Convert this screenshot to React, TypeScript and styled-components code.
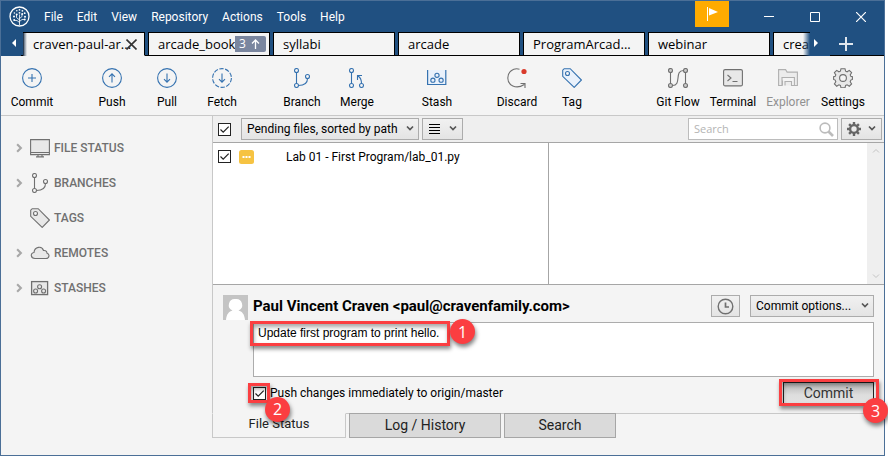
import React from "react";
import styled, { createGlobalStyle, css } from "styled-components";

const c = {
  blue: "#205081",
  frame: "#4b6f97",
  panel: "#f4f4f4",
  line: "#c8c8c8",
  edge: "#a6a6a6",
  icon: "#3572b0",
  gray: "#707070",
  red: "#fb3e41",
};

const GlobalStyle = createGlobalStyle`
  *, *::before, *::after { box-sizing: border-box; }
  body {
    margin: 0;
    background: #fff;
    color: #000;
    font: 12px/16px Roboto, "Open Sans", sans-serif;
  }
  button, input, select, textarea { font: inherit; color: inherit; margin: 0; }
  svg { display: block; flex: none; }
`;

const Page = styled.div`
  padding-right: 3px;
`;

const Window = styled.div`
  display: flex;
  flex-direction: column;
  min-height: 100vh;
  border: 1px solid ${c.frame};
  background: ${c.panel};
`;

/* Title bar */

const TitleBar = styled.header`
  display: flex;
  height: 31px;
  padding-left: 8px;
  background: ${c.blue};
  color: #fff;
`;

const Menu = styled.nav`
  display: flex;
  flex: 1;
  align-items: center;
  gap: 14px;
  padding-left: 14px;
`;

const MenuItem = styled.button`
  padding: 0;
  border: 0;
  background: none;
`;

const LogoSlot = styled.div`
  display: flex;
  align-items: center;
`;

const FlagButton = styled.button`
  display: flex;
  align-items: center;
  justify-content: center;
  width: 34px;
  height: 26px;
  padding: 0;
  border: 0;
  background: #ffab00;
`;

const WindowControls = styled.div`
  display: flex;
  padding-left: 17px;
`;

const WindowButton = styled.button`
  display: flex;
  align-items: center;
  justify-content: center;
  width: 46px;
  padding: 0;
  border: 0;
  background: none;
`;

/* Repository tabs */

const TabBar = styled.div`
  display: flex;
  height: 24px;
  background: ${c.blue};
`;

const ScrollButton = styled.button<{ $side: "left" | "right" }>`
  display: flex;
  align-items: center;
  justify-content: center;
  width: 20px;
  padding: ${(p) => (p.$side === "left" ? "0 0 2px 6px" : "0 8px 2px 0")};
  border: 0;
  background: none;
`;

const TabStrip = styled.div`
  display: flex;
  flex: 1;
  gap: 3px;
  min-width: 0;
  overflow: hidden;
  position: relative;
  padding-left: 2px;
  box-shadow: inset 0 -1px #000;
  &::before, &::after {
    content: "";
    position: absolute;
    top: 1px;
    bottom: 0;
    width: 4px;
  }
  &::before { left: 2px; background: linear-gradient(to right, #33475f, transparent); }
  &::after { right: 0; width: 7px; background: linear-gradient(to left, ${c.blue}, transparent); }
`;

const RepoTab = styled.div<{ $active?: boolean }>`
  display: flex;
  flex: none;
  align-items: center;
  width: 122px;
  padding: 0 3px 0 9px;
  border: 1px solid #000;
  ${(p) => p.$active && css`border-bottom-color: ${c.panel};`}
  background: ${c.panel};
  font-family: "Open Sans", sans-serif;
  font-size: 13px;
  white-space: nowrap;
`;

const RepoName = styled.button`
  flex: 1;
  min-width: 0;
  padding: 0;
  border: 0;
  background: none;
  text-align: left;
`;

const CloseButton = styled.button`
  padding: 0;
  margin-right: 4px;
  border: 0;
  background: none;
`;

const AheadBadge = styled.span`
  display: flex;
  align-items: center;
  justify-content: space-between;
  width: 31px;
  height: 16px;
  padding: 0 6px 0 4px;
  border-radius: 0 2px 2px 0;
  background: #7a869f;
  color: #fff;
  font-size: 12px;
`;

const NewTabButton = styled.button`
  display: flex;
  align-items: center;
  width: 54px;
  padding: 0 0 0 9px;
  border: 0;
  border-bottom: 1px solid #000;
  background: none;
`;

/* Toolbar */

const Toolbar = styled.div`
  display: flex;
  justify-content: space-between;
  height: 60px;
  padding: 0 14px 0 3px;
  border-bottom: 1px solid ${c.line};
`;

const ToolSide = styled.div`
  display: flex;
  gap: 25px;
`;

const ToolGroup = styled.div`
  display: flex;
`;

const Tool = styled.button`
  display: flex;
  flex-direction: column;
  align-items: center;
  gap: 6px;
  width: 55px;
  padding: 12px 0 0 1px;
  border: 0;
  background: none;
  white-space: nowrap;
  &:disabled { color: #919191; }
`;

/* Body */

const Body = styled.div`
  display: flex;
  flex: 1;
`;

const Sidebar = styled.nav`
  display: flex;
  flex: none;
  flex-direction: column;
  width: 211px;
  padding-top: 15px;
`;

const SideItem = styled.button`
  display: flex;
  align-items: center;
  height: 35px;
  padding: 0 0 2px 13px;
  border: 0;
  background: none;
  color: ${c.gray};
  font-weight: 500;
`;

const SideArrow = styled.span`
  width: 16px;
`;

const SideLabel = styled.span`
  padding-left: 4px;
`;

const Main = styled.main`
  display: flex;
  flex: 1;
  flex-direction: column;
  min-width: 0;
`;

const Content = styled.div`
  display: flex;
  flex: 1;
  flex-direction: column;
  border-left: 1px solid ${c.line};
`;

const FilterBar = styled.div`
  display: flex;
  align-items: center;
  gap: 3px;
  height: 27px;
  padding: 0 2px 0 5px;
  border-bottom: 1px solid ${c.edge};
  background: #efefef;
`;

const Spacer = styled.div`
  flex: 1;
`;

const Tick = styled.input`
  flex: none;
  appearance: none;
  width: 13px;
  height: 13px;
  border: 1px solid #222;
  background: #fff;
  &:checked {
    background: #fff
      url("data:image/svg+xml,%3Csvg xmlns='http://www.w3.org/2000/svg' viewBox='0 0 11 11'%3E%3Cpath d='M1.5 5.5l2.7 2.7L9.7 2.6' fill='none' stroke='%23222' stroke-width='1.2'/%3E%3C/svg%3E");
  }
`;

const buttonFace = css`
  border: 1px solid #acacac;
  border-radius: 0;
  background: linear-gradient(#f1f1f1, #e4e4e4);
`;

const SelectWrap = styled.span<{ $width: number; $lead?: number }>`
  display: grid;
  align-items: center;
  width: ${(p) => p.$width}px;
  margin-left: ${(p) => p.$lead ?? 0}px;
  & > * { grid-area: 1 / 1; }
  & > svg { justify-self: end; margin-right: 5px; margin-bottom: 3px; pointer-events: none; }
`;

const Select = styled.select`
  ${buttonFace}
  appearance: none;
  width: 100%;
  height: 22px;
  padding: 0 0 0 5px;
`;

const DropButton = styled.button`
  ${buttonFace}
  display: flex;
  align-items: center;
  justify-content: space-between;
  width: 41px;
  height: 22px;
  padding: 0 5px;
  & > svg:last-child { margin-bottom: 3px; }
`;

const SearchBox = styled.label`
  display: flex;
  align-items: center;
  width: 150px;
  height: 22px;
  padding-right: 3px;
  border: 1px solid #bcbcbc;
  background: #fff;
`;

const SearchInput = styled.input`
  flex: 1;
  min-width: 0;
  padding: 0 0 0 5px;
  border: 0;
  outline: 0;
  background: none;
  font-family: "Open Sans", sans-serif;
  font-size: 11px;
  &::placeholder { color: #b4b4b4; opacity: 1; }
`;

const Files = styled.div`
  display: flex;
  flex: 1;
  border-bottom: 1px solid ${c.edge};
  background: #fff;
`;

const FileList = styled.div`
  width: 336px;
  padding: 5px 5px;
  border-right: 1px solid ${c.edge};
`;

const FileRow = styled.label`
  display: flex;
  align-items: center;
  height: 17px;
`;

const FileState = styled.span`
  display: flex;
  margin: 0 32px 0 8px;
`;

const DiffPane = styled.div`
  flex: 1;
`;

const ScrollTrack = styled.div`
  display: flex;
  flex-direction: column;
  align-items: center;
  justify-content: space-between;
  width: 17px;
  padding: 4px 0;
  background: #efefef;
`;

/* Commit form */

const CommitForm = styled.form`
  display: flex;
  flex-direction: column;
  padding: 10px 10px 9px;
`;

const Author = styled.div`
  display: flex;
  align-items: center;
  height: 25px;
`;

const AuthorName = styled.strong`
  flex: 1;
  padding: 0 0 4px 5px;
  font-size: 15px;
`;

const HistoryButton = styled.button`
  ${buttonFace}
  display: flex;
  align-items: center;
  justify-content: center;
  width: 29px;
  height: 22px;
  padding: 0;
`;

const AuthorTools = styled.div`
  display: flex;
  align-self: flex-start;
`;

const MessageWrap = styled.div`
  display: flex;
  position: relative;
  margin: 2px 0 0 30px;
`;

const Message = styled.textarea`
  flex: 1;
  height: 55px;
  padding: 2px 4px;
  border: 1px solid #acacac;
  outline: 0;
  resize: none;
  background: #fff;
  font: 12px/16px "Liberation Sans", Arial, sans-serif;
`;

const Actions = styled.div`
  display: flex;
  justify-content: space-between;
  padding: 5px 0 0 30px;
`;

const PushOption = styled.label`
  display: flex;
  align-items: center;
  gap: 4px;
`;

const Anchor = styled.span`
  display: flex;
  position: relative;
`;

const CommitButton = styled.button`
  width: 91px;
  height: 22px;
  padding: 0;
  border: 1px solid #222;
  background: linear-gradient(#b4b4b4, #dedede 60%, #e2e2e2);
  color: #333;
  font-size: 14px;
`;

/* Numbered call-outs */

const Callout = styled.span<{ $inset: string; $width?: number; $height?: number }>`
  position: absolute;
  z-index: 1;
  inset: ${(p) => p.$inset};
  ${(p) => p.$width && css`width: ${p.$width}px;`}
  ${(p) => p.$height && css`height: ${p.$height}px;`}
  border: 3px solid ${c.red};
  box-shadow: 1px 3px 4px rgba(0, 0, 0, 0.45), inset 1px 3px 4px rgba(0, 0, 0, 0.35);
  pointer-events: none;
`;

const Marker = styled.span<{ $left: number; $top: number }>`
  position: absolute;
  z-index: 2;
  left: ${(p) => p.$left}px;
  top: ${(p) => p.$top}px;
  display: flex;
  align-items: center;
  justify-content: center;
  width: 25px;
  height: 25px;
  border-radius: 50%;
  background: ${c.red};
  box-shadow: 1px 3px 4px rgba(0, 0, 0, 0.5);
  color: #fff;
  font-family: "Open Sans", sans-serif;
  font-size: 16px;
`;

/* View tabs */

const ViewTabs = styled.div`
  display: flex;
  padding-bottom: 17px;
`;

const ViewTab = styled.button<{ $width: number; $active?: boolean }>`
  width: ${(p) => p.$width}px;
  height: 25px;
  padding: 0 0 2px;
  border: 1px solid ${c.edge};
  background: #dadada;
  color: #222;
  font-size: 14px;
  ${(p) =>
    p.$active &&
    css`
      border-color: ${c.line};
      border-top-color: transparent;
      background: ${c.panel};
      padding: 0 0 4px;
      font-size: 13px;
    `}
`;

const ViewRule = styled.div<{ $gap?: boolean }>`
  ${(p) => (p.$gap ? css`width: 3px;` : css`flex: 1;`)}
  border-top: 1px solid ${c.line};
`;

/* Drawings */

const Chevron = ({ size = 8, color = "#555", dir = "down", weight = 1.7 }: { size?: number; color?: string; dir?: "down" | "up" | "right"; weight?: number }) => {
  const d = { down: "M1 2.5l3 3 3-3", up: "M1 5.5l3-3 3 3", right: "M2.5 1l3 3-3 3" }[dir];
  return (
    <svg width={size} height={size} viewBox="0 0 8 8" fill="none" stroke={color} strokeWidth={weight}>
      <path d={d} />
    </svg>
  );
};

const Logo = () => (
  <svg width="21" height="21" viewBox="0 0 21 21" fill="none" stroke="#fff">
    <circle cx="10.5" cy="10.5" r="9.5" strokeWidth="1.3" />
    <path d="M10.5 19v-8M10.500 16.500L8 14.500H5.500M10.500 14L7.500 11.500V9M10.500 15.500l2.500-2h2.500M10.500 12.500l2.500-2V8M10.500 11V8.500" strokeWidth="0.8" />
    <g fill="#fff" stroke="none">
      <circle cx="10.5" cy="3.8" r=".9" /><circle cx="7.800" cy="4.800" r=".8" /><circle cx="13.400" cy="4.800" r=".9" />
      <circle cx="10.500" cy="6.800" r=".9" /><circle cx="5.400" cy="7" r=".8" /><circle cx="15.700" cy="7.200" r=".9" />
      <circle cx="7.700" cy="8.500" r="1" /><circle cx="13.200" cy="8" r="1" /><circle cx="5" cy="10.500" r="1" />
      <circle cx="16" cy="10.700" r="1" /><circle cx="5.200" cy="14" r="1" /><circle cx="15.700" cy="13.500" r="1" />
    </g>
  </svg>
);

const Icon = ({ children, color = c.icon, fill = "none" }: { children: React.ReactNode; color?: string; fill?: string }) => (
  <svg width="20" height="20" viewBox="0 0 20 20" fill={fill} stroke={color} strokeWidth="1.1">
    {children}
  </svg>
);

const CommitIcon = () => <Icon><circle cx="10" cy="10" r="9.4" /><path d="M10 6v8M6 10h8" /></Icon>;
const PushIcon = () => <Icon><circle cx="10" cy="10" r="9.4" /><path d="M10 14.5V6M7 8.8l3-3 3 3" /></Icon>;
const PullIcon = () => <Icon><circle cx="10" cy="10" r="9.4" /><path d="M10 5.5V14M7 11.2l3 3 3-3" /></Icon>;
const FetchIcon = () => <Icon><circle cx="10" cy="10" r="9.4" strokeDasharray="4.4 1.5" /><path d="M10 5.5V14M7 11.2l3 3 3-3" /></Icon>;
const BranchIcon = ({ color = c.icon }: { color?: string }) => (
  <Icon color={color}>
    <circle cx="4.5" cy="2.5" r="2" /><circle cx="4.5" cy="17.5" r="2" /><circle cx="15.5" cy="8.5" r="2" />
    <path d="M4.5 4.5v11M6.5 17.5c5.500 0 9-2.500 9-7" />
  </Icon>
);
const MergeIcon = () => (
  <Icon>
    <circle cx="4.500" cy="2.500" r="2" /><circle cx="4.500" cy="17.500" r="2" /><circle cx="14.500" cy="17.500" r="2" />
    <path d="M4.500 4.500v11M14.500 15.500c0-3-1-6-3.500-7.500M10.500 12V7.500h4.500" />
  </Icon>
);
const StashIcon = () => (
  <Icon fill="#e9f1fb">
    <path d="M.6 2v14.500h18.200V2" strokeWidth="1.200" />
    <circle cx="10" cy="7.300" r="2.100" /><circle cx="5.900" cy="12.200" r="2.100" /><circle cx="14.100" cy="12.200" r="2.100" />
  </Icon>
);
const DiscardIcon = () => (
  <Icon color={c.gray}>
    <path d="M12.500 1.200C6 -.5.8 4 .8 10c0 7 8 12 16.500 6.500M18 20v-4.500h-4.500" />
    <circle cx="17" cy="3.500" r="2.600" fill="#d93a2b" stroke="none" />
  </Icon>
);
const TagIcon = ({ color = c.icon, fill = "#e9f1fb" }: { color?: string; fill?: string }) => (
  <Icon color={color} fill={fill}>
    <path d="M.7 2.200V8.300L12.200 19.400 19.400 12 8.200.7H2.200z" />
    <circle cx="5.500" cy="5.500" r="2" fill={c.panel} />
  </Icon>
);
const GitFlowIcon = () => (
  <Icon color={c.gray} fill="#ccc">
    <path d="M2.500 4v12M17.500 4v12M4.500 17.500C14 17.500 6 2.500 15.500 2.500" fill="none" />
    <circle cx="2.500" cy="2.500" r="2" /><circle cx="2.500" cy="17.500" r="2" />
    <circle cx="17.500" cy="2.500" r="2" /><circle cx="17.500" cy="17.500" r="2" />
  </Icon>
);
const TerminalIcon = () => (
  <Icon color={c.gray} fill="#e8e8e8">
    <rect x=".6" y="1.600" width="18.800" height="16.300" rx="1.500" />
    <path d="M4.500 7l3.500 3-3.500 3M9.500 13.500h5" fill="none" />
  </Icon>
);
const ExplorerIcon = () => (
  <Icon color="#b0b0b0" fill="#ececec">
    <path d="M.6 17.500V1.600h7l1.500 2.500h10.300v13.400h-3V9.500H4v8z" />
    <path d="M4.500 17.500v-5M7 17.500v-4h6.500v4h3" />
  </Icon>
);
const SettingsIcon = () => (
  <Icon color={c.gray} fill="#e8e8e8">
    <path d="M8 .7h4l.6 2.500 1.500.6 2.200-1.400 2.300 2.300-1.400 2.200.6 1.500 1.600.4v2.600l-1.600.7-.6 1.600 1.400 2.200-2.300 2.300-2.200-1.400-1.500.6-.6 2.500H8l-.6-2.500-1.500-.6-2.200 1.400-2.300-2.300 1.400-2.200-.6-1.600-1.600-.7V8.800l1.600-.4.6-1.500L1.400 4.700l2.300-2.300 2.200 1.400 1.500-.6z" />
    <circle cx="10" cy="10" r="3.400" fill={c.panel} />
  </Icon>
);
const MonitorIcon = () => (
  <Icon color={c.gray} fill="#e8e8e8">
    <path d="M.6 1.600h18.800v15H.6zM.6 14.500h18.800M6 18.900h8M8 17v2M12 17v2" />
  </Icon>
);
const CloudIcon = () => (
  <Icon color={c.gray} fill="#e8e8e8">
    <path d="M5 15.500c-4.500 0-5-5.500-1-6 .5-6 8-7 9.500-2 3-.3 3.500 1.500 3.500 2.700 3 .8 2.500 5.300-1 5.300z" />
  </Icon>
);
const SideStashIcon = () => (
  <Icon color={c.gray} fill="#e8e8e8">
    <rect x="1.600" y="3.600" width="16" height="13" strokeWidth="1.300" />
    <circle cx="9.600" cy="8.700" r="2" /><circle cx="5.600" cy="13" r="2" /><circle cx="13.600" cy="13" r="2" />
  </Icon>
);
const GearSolid = () => (
  <svg width="14" height="14" viewBox="0 0 14 14" fill="none" stroke="#666">
    <circle cx="7" cy="7" r="3.900" strokeWidth="2.400" />
    <path d="M7 0v3M7 11v3M0 7h3M11 7h3M2.100 2.100l2 2M9.900 9.900l2 2M2.100 11.900l2-2M9.900 4.100l2-2" strokeWidth="2.400" />
  </svg>
);
const UserAvatar = () => (
  <svg width="25" height="25" viewBox="0 0 25 25">
    <path fill="#c4c4c4" d="M0 0h25v25H0z" />
    <path fill="#fff" d="M12.500 4a6 6 0 0 0-3 11.500C6 16.500 3.500 19 3 25h19c-.5-6-3-8.500-6.500-9.500A6 6 0 0 0 12.500 4z" />
  </svg>
);

/* Data */

const menus = ["File", "Edit", "View", "Repository", "Actions", "Tools", "Help"];

const repos = [
  { name: "craven-paul-ar...", active: true },
  { name: "arcade_book", ahead: 3 },
  { name: "syllabi" },
  { name: "arcade" },
  { name: "ProgramArcad..." },
  { name: "webinar" },
  { name: "crea" },
];

const leftTools = [
  [{ label: "Commit", icon: <CommitIcon /> }],
  [
    { label: "Push", icon: <PushIcon /> },
    { label: "Pull", icon: <PullIcon /> },
    { label: "Fetch", icon: <FetchIcon /> },
  ],
  [
    { label: "Branch", icon: <BranchIcon /> },
    { label: "Merge", icon: <MergeIcon /> },
  ],
  [{ label: "Stash", icon: <StashIcon /> }],
  [
    { label: "Discard", icon: <DiscardIcon /> },
    { label: "Tag", icon: <TagIcon /> },
  ],
];

const rightTools = [
  { label: "Git Flow", icon: <GitFlowIcon /> },
  { label: "Terminal", icon: <TerminalIcon /> },
  { label: "Explorer", icon: <ExplorerIcon />, disabled: true },
  { label: "Settings", icon: <SettingsIcon /> },
];

const sections = [
  { label: "FILE STATUS", icon: <MonitorIcon />, opens: true },
  { label: "BRANCHES", icon: <BranchIcon color={c.gray} />, opens: true },
  { label: "TAGS", icon: <TagIcon color={c.gray} fill="#e8e8e8" />, opens: false },
  { label: "REMOTES", icon: <CloudIcon />, opens: true },
  { label: "STASHES", icon: <SideStashIcon />, opens: true },
];

export default function App() {
  return (
    <Page>
      <GlobalStyle />
      <Window>
        <TitleBar>
          <LogoSlot><Logo /></LogoSlot>
          <Menu>
            {menus.map((m) => <MenuItem key={m}>{m}</MenuItem>)}
          </Menu>
          <FlagButton aria-label="Notifications">
            <svg width="12" height="16" viewBox="0 0 12 16"><path d="M1.500 1v14" stroke="#fff" /><path d="M3 2l9 4-9 3.500z" fill="#fff" /></svg>
          </FlagButton>
          <WindowControls>
            <WindowButton aria-label="Minimize"><svg width="10" height="10"><path d="M0 4.500h10" stroke="#fff" /></svg></WindowButton>
            <WindowButton aria-label="Maximize"><svg width="10" height="10"><path d="M.5.5h9v9h-9z" stroke="#fff" fill="none" /></svg></WindowButton>
            <WindowButton aria-label="Close"><svg width="10" height="10"><path d="M0 0l10 10M10 0L0 10" stroke="#fff" strokeWidth="1.200" /></svg></WindowButton>
          </WindowControls>
        </TitleBar>

        <TabBar>
          <ScrollButton $side="left" aria-label="Scroll tabs left"><svg width="4" height="8"><path d="M4 0v8L0 4z" fill="#fff" /></svg></ScrollButton>
          <TabStrip>
            {repos.map((r) => (
              <RepoTab key={r.name} $active={r.active}>
                <RepoName>{r.name}</RepoName>
                {r.active && (
                  <CloseButton aria-label="Close tab">
                    <svg width="11" height="11"><path d="M.5.5l10 10M10.500.5l-10 10" stroke="#333" strokeWidth="1.600" /></svg>
                  </CloseButton>
                )}
                {r.ahead && (
                  <AheadBadge>
                    {r.ahead}
                    <svg width="9" height="10" fill="none" stroke="#fff" strokeWidth="1.300"><path d="M4.500 10V1M1 4.500l3.500-3.500L8 4.500" /></svg>
                  </AheadBadge>
                )}
              </RepoTab>
            ))}
          </TabStrip>
          <ScrollButton $side="right" aria-label="Scroll tabs right"><svg width="4" height="8"><path d="M0 0v8l4-4z" fill="#fff" /></svg></ScrollButton>
          <NewTabButton aria-label="New tab"><svg width="14" height="14"><path d="M7 0v14M0 7h14" stroke="#dfe6ee" strokeWidth="2" /></svg></NewTabButton>
        </TabBar>

        <Toolbar>
          <ToolSide>
            {leftTools.map((group) => (
              <ToolGroup key={group[0].label}>
                {group.map((t) => <Tool key={t.label}>{t.icon}{t.label}</Tool>)}
              </ToolGroup>
            ))}
          </ToolSide>
          <ToolGroup>
            {rightTools.map((t) => <Tool key={t.label} disabled={t.disabled}>{t.icon}{t.label}</Tool>)}
          </ToolGroup>
        </Toolbar>

        <Body>
          <Sidebar>
            {sections.map((s) => (
              <SideItem key={s.label}>
                <SideArrow>{s.opens && <Chevron dir="right" color="#a8a8a8" size={10} />}</SideArrow>
                {s.icon}
                <SideLabel>{s.label}</SideLabel>
              </SideItem>
            ))}
          </Sidebar>

          <Main>
            <Content>
              <FilterBar>
                <Tick type="checkbox" defaultChecked aria-label="Select all files" />
                <SelectWrap $width={178} $lead={7}>
                  <Select aria-label="File filter"><option>Pending files, sorted by path</option></Select>
                  <Chevron />
                </SelectWrap>
                <DropButton aria-label="View mode" aria-haspopup="menu">
                  <svg width="13" height="11"><path d="M1 .5h11M1 3.500h11M1 6.500h11M1 9.500h11" stroke="#000" /></svg>
                  <Chevron />
                </DropButton>
                <Spacer />
                <SearchBox>
                  <SearchInput placeholder="Search" aria-label="Search" />
                  <svg width="15" height="15" viewBox="0 0 15 15" fill="none" stroke="#bcbcbc"><circle cx="6" cy="6" r="4.900" strokeWidth="1.600" /><path d="M9.500 9.500l4.500 4.500" strokeWidth="2.600" /></svg>
                </SearchBox>
                <DropButton aria-label="Options" aria-haspopup="menu"><GearSolid /><Chevron /></DropButton>
              </FilterBar>

              <Files>
                <FileList>
                  <FileRow>
                    <Tick type="checkbox" defaultChecked />
                    <FileState>
                      <svg width="15" height="14"><rect width="15" height="14" rx="2.500" fill="#f6c342" /><path d="M3.500 7h2M6.500 7h2M9.500 7h2" stroke="#fff" strokeWidth="2" /></svg>
                    </FileState>
                    Lab 01 - First Program/lab_01.py
                  </FileRow>
                </FileList>
                <DiffPane />
                <ScrollTrack>
                  <Chevron dir="up" color="#c4c4c4" weight={1} />
                  <Chevron color="#c4c4c4" weight={1} />
                </ScrollTrack>
              </Files>

              <CommitForm onSubmit={(e) => e.preventDefault()}>
                <Author>
                  <UserAvatar />
                  <AuthorName>Paul Vincent Craven &lt;paul@cravenfamily.com&gt;</AuthorName>
                  <AuthorTools>
                    <HistoryButton type="button" aria-label="Recent messages">
                      <svg width="17" height="17" fill="none" stroke="#707070"><circle cx="8.500" cy="8.500" r="7.300" strokeWidth="1.400" /><path d="M8.500 4.500v4.500H12" strokeWidth="1.700" /></svg>
                    </HistoryButton>
                    <SelectWrap $width={124} $lead={10}>
                      <Select aria-label="Commit options"><option>Commit options...</option></Select>
                      <Chevron />
                    </SelectWrap>
                  </AuthorTools>
                </Author>
                <MessageWrap>
                  <Message aria-label="Commit message" defaultValue="Update first program to print hello." />
                  <Callout $inset="-1px auto auto -3px" $width={200} $height={25} />
                  <Marker $left={197} $top={-3}>1</Marker>
                </MessageWrap>
                <Actions>
                  <PushOption>
                    <Anchor>
                      <Tick type="checkbox" defaultChecked />
                      <Callout $inset="-4px -4px -3px -5px" />
                      <Marker $left={12} $top={10}>2</Marker>
                    </Anchor>
                    Push changes immediately to origin/master
                  </PushOption>
                  <Anchor>
                    <CommitButton type="submit">Commit</CommitButton>
                    <Callout $inset="-3px -5px -2px -4px" />
                    <Marker $left={80} $top={16}>3</Marker>
                  </Anchor>
                </Actions>
              </CommitForm>
            </Content>

            <ViewTabs>
              <ViewTab $width={134} $active>File Status</ViewTab>
              <ViewRule $gap />
              <ViewTab $width={152}>Log / History</ViewTab>
              <ViewRule $gap />
              <ViewTab $width={112}>Search</ViewTab>
              <ViewRule />
            </ViewTabs>
          </Main>
        </Body>
      </Window>
    </Page>
  );
}
